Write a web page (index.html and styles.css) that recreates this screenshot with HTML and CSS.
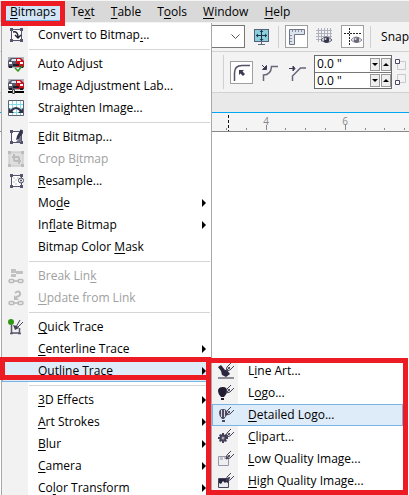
FILE: index.html
```html
<!DOCTYPE html>
<html lang="en">
<head>
<meta charset="utf-8">
<title>Bitmaps menu</title>
<link rel="stylesheet" href="styles.css">
</head>
<body>
<svg class="defs" aria-hidden="true">
  <defs>
    <g id="frame"><path d="M3.500 2.500h10v11h-10z" fill="#fff" stroke="#55556f"/><path d="M2 1h3v3H2zM12 1h3v3h-3zM2 12h3v3H2zM12 12h3v3h-3z" fill="#55556f"/></g>
    <g id="car"><path d="M0 1h16v11H0z" fill="#aeb2bc"/><path d="M0 5l3-3h5v9H0z" fill="#565a6c"/><path d="M8 2h5l3 3v6H8z" fill="#c4141c"/><path d="M4 3h4v2H3zM9 3h3l1 2H9z" fill="#e4e8ee"/><path d="M1 6h3v2H1zM12 6h3v2h-3z" fill="#fff"/><path d="M5 8h6v2H5zM1 10h3v2H1zM12 10h3v2h-3z" fill="#201c28"/></g>
    <g id="chain" fill="none" stroke="#b9b9b9" stroke-width="1.500"><rect x="1" y="11.500" width="5" height="3" rx="1.500"/><rect x="10" y="11.500" width="5" height="3" rx="1.500"/><path d="M5 13h6"/></g>
    <g id="pen"><path d="M8 8l1-4 4-4M8 8l4-1 4-4M8 8l4-4" fill="none" stroke="#454056"/><circle cx="11" cy="5" r="1" fill="#454056"/></g>
    <g id="eye"><path d="M0 4Q5-2 11 4Q6 9 0 4z" fill="#fff" stroke="#55556a"/><circle cx="5.500" cy="4" r="2.800" fill="#33334a"/><circle cx="4.500" cy="3" r="1" fill="#d8dde8"/></g>
  </defs>
</svg>

<div class="app">
  <nav class="menubar">
    <button class="open"><u>B</u>itmaps</button>
    <button>Te<u>x</u>t</button>
    <button><u>T</u>able</button>
    <button>T<u>o</u>ols</button>
    <button><u>W</u>indow</button>
    <button><u>H</u>elp</button>
  </nav>

  <div class="toolbar standard">
    <select aria-label="Zoom level"><option></option></select>
    <button class="tool" aria-label="Full screen"><svg width="16" height="16"><rect x="1.500" y=".5" width="14" height="12" fill="#8bd0dd" stroke="#55607a"/><path d="M5 15.500h7M8.500 13v2" stroke="#666a80"/><path d="M3 6.500h11M8.500 1v11" stroke="#23334c"/><path d="M3 6.500l2-2v4zM14 6.500l-2-2v4zM8.500 1l-2 2h4zM8.500 12l-2-2h4z" fill="#23334c"/></svg></button>
    <span class="rule"></span>
    <button class="tool boxed" aria-label="Rulers"><svg width="17" height="17"><path d="M1.500 1.500h15v5h-10v10h-5z" fill="#dbe3ed" stroke="#707487"/><path d="M4.500 2v2M7.500 2v2M10.500 2v2M13.500 2v2M2 7.500h2M2 10.500h2M2 13.500h2" stroke="#8c90a5"/></svg></button>
    <button class="tool" aria-label="Grid"><svg width="17" height="17"><path d="M2.500 0v14M5.500 0v14M8.500 0v14M11.500 0v14M14.500 0v14M0 2.500h16M0 5.500h16M0 8.500h16M0 11.500h16" stroke="#aeb0be"/><use href="#eye" x="5" y="8"/></svg></button>
    <button class="tool boxed" aria-label="Guidelines"><svg width="18" height="17"><path d="M5.500 0v17M0 5.500h17" stroke="#222" stroke-dasharray="2 1"/><use href="#eye" x="7" y="8" opacity=".75"/></svg></button>
    <span class="rule"></span>
    <span class="snap">Snap</span>
  </div>

  <div class="toolbar property">
    <span class="rule"></span>
    <button class="tool boxed" aria-label="Round corner"><svg width="17" height="17"><path d="M1.500 17V9Q1.500 1.500 9 1.500h8" fill="none" stroke="#555268" stroke-width="1.500"/><path d="M6 6h5l-1.500 1.500L12 10l-2 2-2.500-2.500L6 11z" fill="#3d3a54"/></svg></button>
    <button class="tool" aria-label="Scalloped corner"><svg width="17" height="17"><path d="M2.500 17v-6Q10 11 10.500 2.500H17" fill="none" stroke="#68657a" stroke-width="1.500"/><path d="M1 1l3 3M5.500 1.500v4h-4z" fill="#3d3a54" stroke="#3d3a54"/></svg></button>
    <button class="tool" aria-label="Chamfered corner"><svg width="17" height="17"><path d="M3.500 17v-5l8-8H17" fill="none" stroke="#68657a" stroke-width="1.500"/><path d="M0 4.500h5M4 2l2 2.500L4 7z" fill="#3d3a54" stroke="#3d3a54"/></svg></button>
    <div class="fields">
      <div class="field"><input aria-label="Corner radius top" value='0.0 "'><button aria-label="Decrease top radius"><i class="down"></i></button><button aria-label="Increase top radius"><i class="up"></i></button></div>
      <div class="field"><input aria-label="Corner radius bottom" value='0.0 "'><button aria-label="Decrease bottom radius"><i class="down"></i></button><button aria-label="Increase bottom radius"><i class="up"></i></button></div>
    </div>
    <svg class="corners" width="14" height="30"><path d="M3.500 4.500h8v8h-8zM3.500 17.500h8v8h-8z" fill="none" stroke="#c8c8d0"/><path d="M1.500 2.500h4v4h-4zM1.500 23.500h4v4h-4z" fill="#fff" stroke="#4c4966"/></svg>
  </div>

  <div class="tabs"></div>
  <div class="ruler">
    <svg width="220" height="18" aria-hidden="true"><path d="M6.500 15v2M26.500 15v2M46.500 12v5M65.500 15v2M85.500 15v2M105.500 15v2M125.500 12v5M145.500 15v2M164.500 15v2M184.500 15v2" stroke="#888"/><path d="M8.500 2v16" stroke="#111" stroke-dasharray="3 2"/><text x="46" y="12">4</text><text x="125" y="12">6</text></svg>
  </div>
  <main class="canvas"></main>

  <div class="menu main-menu">
    <button><svg class="icon"><use href="#frame"/><path d="M5 5q5-1 5 5M7 8l3 3 3-3" fill="none" stroke="#262639" stroke-width="1.500"/></svg>Convert to Bitmap<u>.</u>..</button>
    <hr>
    <button><svg class="icon"><use href="#car"/><path d="M7 12l3 3 4-5" fill="none" stroke="#32951e" stroke-width="1.500"/></svg>Au<u>t</u>o Adjust</button>
    <button><svg class="icon"><use href="#car"/><path d="M0 13h16v2H0z"/><path d="M4.500 11.500h2v4h-2z" fill="#ddd" stroke="#444"/></svg>Image Adjustment Lab...</button>
    <button><svg class="icon"><path d="M.5 .5h15v15H.5z" fill="#fff" stroke="#5e6074"/><path d="M4.500 1v14M8.500 1v14M12.500 1v14M1 4.500h14M1 8.500h14M1 12.500h14" stroke="#82dce7"/><path d="M3 11q5-6 10 0" fill="none" stroke="#333047" stroke-width="2"/><path d="M1 8v5h5zM15 8v5h-5z" fill="#333047"/></svg>Strai<u>g</u>hten Image...</button>
    <hr>
    <button><svg class="icon"><use href="#frame"/><path d="M13 0l-4 7-1 4 3-1 4-6z" fill="#35354c"/><path d="M8 13l5-6v6z" fill="#77778b"/></svg><u>E</u>dit Bitmap...</button>
    <button disabled><svg class="icon"><path d="M1 1h14v14H1z" fill="#dedede" stroke="#c4c4c4"/><path d="M0 0h3v3H0zM13 0h3v3h-3zM0 13h3v3H0zM13 13h3v3h-3zM4 5h7v2H4zM5 3h2v7H5zM6 9h7v2H6zM10 6h2v7h-2z" fill="#bcbcbc"/></svg>Crop B<u>i</u>tmap</button>
    <button><svg class="icon"><use href="#frame"/><path d="M5 4h2v2H5zM9 4h2v2H9zM7 6h2v2H7zM5 8h2v2H5zM7 10h2v2H7z" fill="#ddd"/><circle cx="13" cy="7.500" r="2.500" fill="#fff" stroke="#44445c"/><circle cx="13" cy="7.500" r="1" fill="#44445c"/></svg><u>R</u>esample...</button>
    <button class="sub">Mo<u>d</u>e</button>
    <button class="sub">In<u>f</u>late Bitmap</button>
    <button>Bitmap Color <u>M</u>ask</button>
    <hr>
    <button disabled><svg class="icon"><use href="#chain"/><path d="M3 1h5v4H3zM3 6h5v3H3zM8 3h7v3H8z" fill="#c2c2c2"/></svg>Break Lin<u>k</u></button>
    <button disabled><svg class="icon"><use href="#chain"/><path d="M7 3q4-3 5 0t-4 4" fill="none" stroke="#bbb" stroke-width="2"/><path d="M6 5v5h5z" fill="#bbb"/></svg><u>U</u>pdate from Link</button>
    <hr>
    <button><svg class="icon"><path d="M3.500 6v8h8V9M2 14.500h3M10 14.500h3" fill="none" stroke="#56566c" stroke-width="1.500"/><path d="M5 6l2 5 4-2-2-2z" fill="#454558"/><path d="M8 8l4-7M9 9l6-6" fill="none" stroke="#454558"/><circle cx="3" cy="3" r="3" fill="#319614"/></svg><u>Q</u>uick Trace</button>
    <button class="sub"><u>C</u>enterline Trace</button>
    <button class="sub active">Outline Trace</button>
    <hr>
    <button class="sub"><u>3</u>D Effects</button>
    <button class="sub"><u>A</u>rt Strokes</button>
    <button class="sub"><u>B</u>lur</button>
    <button class="sub"><u>C</u>amera</button>
    <button class="sub">Co<u>l</u>or Transform</button>
  </div>

  <div class="menu trace-menu">
    <button><svg class="icon"><path d="M0 4l3-2 4 5 2 0 3 4-4 3-4-2-1-4zM0 14.500h16v1H0z" fill="#2c273e"/><use href="#pen"/></svg>L<u>i</u>ne Art...</button>
    <button><svg class="icon"><path d="M0 6q0-4 5-4 4 0 4 4 0 3-3 6H3Q0 9 0 6zM3 13h3v2H3z" fill="#211c32"/><use href="#pen"/></svg>L<u>o</u>go...</button>
    <button class="active"><svg class="icon"><path d="M1 6q0-4 4-4t4 4q0 3-3 6H4Q1 9 1 6zM4 13h3v2H4z" fill="#4d4a60"/><path d="M3.500 3v7M6.500 3v7" stroke="#d6dbe7"/><use href="#pen"/></svg><u>D</u>etailed Logo...</button>
    <button><svg class="icon"><path d="M4 4h2v2l2-1 1 2-1 1h2v2H8l1 2-2 1-1-1v2H4v-2l-2 1-1-2 1-1H0V8h2L1 6l2-1 1 1z" fill="#454057"/><circle cx="5" cy="9" r="1.500" fill="#aaa9b7"/><use href="#pen"/></svg><u>C</u>lipart...</button>
    <button><svg class="icon"><path d="M.5 5.500h10v9H.5z" fill="#edf0f2" stroke="#9997a5"/><path d="M2 6h3v3H2zM6 6h3v2H6z" fill="#c2bfca"/><use href="#pen"/></svg><u>L</u>ow Quality Image...</button>
    <button><svg class="icon"><path d="M.5 5.500h10v9H.5z" fill="#e8ecf1" stroke="#474459"/><path d="M1 6h9v4L8 9l-1 1-2-2-2 3-2-1z" fill="#262139"/><use href="#pen"/></svg><u>H</u>igh Quality Image...</button>
  </div>

  <div class="mark mark-title"></div>
  <div class="mark mark-row"></div>
  <div class="mark mark-submenu"></div>
</div>
</body>
</html>
```
FILE: styles.css
```css
* { box-sizing: border-box; }
body {
  margin: 0;
  overflow: hidden;
  background: #fff;
  color: #000;
  font: 12px/16px "Segoe UI", "Open Sans", "Noto Sans", sans-serif;
}
button, input, select { margin: 0; padding: 0; border: 0; border-radius: 0; font: inherit; color: inherit; background: none; }
u { text-decoration-thickness: 1px; text-underline-offset: 2px; }
.defs { position: absolute; width: 0; height: 0; }
.app { position: relative; display: flex; flex-direction: column; height: 100vh; overflow: hidden; }

.menubar {
  display: flex;
  flex: none;
  height: 22px;
  padding-left: 5px;
  border-top: 1px solid #f4f4f4;
  background: #d9d9d9;
}
.menubar button { padding: 0 8px; line-height: 22px; }
.menubar .open { padding: 0 5px; margin-right: 2px; background: #d3e6f8; border-bottom: 2px solid #62a8e2; }

.toolbar { display: flex; flex: none; align-items: center; background: #f3f3f3; border-bottom: 1px solid #d2d2d2; }
.rule { width: 1px; height: 22px; background: #d0d0d0; }
.tool { display: grid; place-items: center; width: 23px; height: 23px; }
.tool svg { display: block; }
.boxed { background: #fff; border: 1px solid #9f9f9f; }

.standard { height: 30px; padding-left: 145px; }
.standard select {
  appearance: none;
  width: 100px;
  height: 23px;
  margin-right: 5px;
  border: 1px solid #777;
  background: #fff url("data:image/svg+xml,%3Csvg xmlns='http://www.w3.org/2000/svg' width='9' height='6'%3E%3Cpath d='M.5 .5l4 4 4-4' fill='none' stroke='%23555'/%3E%3C/svg%3E") no-repeat right 4px center;
}
.standard .rule { margin: 0 6px; }
.standard .boxed + .tool { margin: 0 5px; }
.snap { margin-left: 4px; }

.property { height: 41px; padding-left: 223px; }
.property .rule { height: 34px; margin-right: 6px; }
.property .tool { margin-right: 5px; }
.fields { display: flex; flex-direction: column; margin-right: 2px; border: 1px solid #6b6b6b; background: #fff; }
.field { display: flex; align-items: center; height: 16px; }
.field + .field { border-top: 1px solid #777; }
.field input { width: 55px; height: 14px; padding-left: 2px; outline: 0; }
.field button { display: grid; place-items: center; width: 10px; height: 13px; background: #eee; border: 1px solid #999; }
.field button + button { margin-left: 1px; }
.field i { border: 3px solid transparent; }
.field .down { border-top-color: #000; border-bottom: 0; }
.field .up { border-bottom-color: #000; border-top: 0; }

.tabs { flex: none; height: 19px; background: #e9e9e9; }
.ruler { flex: none; height: 20px; padding-left: 220px; background: #f4f4f4; border-top: 1px solid #00a6f4; border-bottom: 1px solid #888; overflow: hidden; }
.ruler svg { display: block; }
.ruler text { font-size: 10px; fill: #888; text-anchor: middle; }
.canvas { flex: 1; background: #fff; }

.menu { position: absolute; z-index: 1; display: flex; flex-direction: column; background: linear-gradient(90deg, #f2f2f2 26px, #fff 26px); }
.menu button { position: relative; flex: none; height: 22px; padding-left: 36px; text-align: left; white-space: nowrap; line-height: 22px; }
.menu button:disabled { color: #a0a0a0; }
.menu hr { flex: none; width: calc(100% - 28px); height: 1px; margin: 3px 1px 3px 27px; border: 0; background: #d5d5d5; }
.icon { position: absolute; left: 6px; top: 3px; width: 16px; height: 16px; }
.sub::after { content: ""; position: absolute; right: 5px; top: 7px; border: 4px solid transparent; border-left-color: #000; border-right: 0; }
.menu .active { background: #deebf8; box-shadow: inset 0 0 0 1px #78b5e4; }
.main-menu { left: 1px; top: 23px; width: 211px; bottom: 0; padding-top: 1px; border: 1px solid #a8a8a8; border-width: 0 1px; overflow: hidden; }
.trace-menu { left: 212px; top: 360px; width: 191px; bottom: 0; }

.mark { position: absolute; z-index: 2; border: 5px solid #ed1c24; pointer-events: none; }
.mark-title { left: 1px; top: 1px; width: 64px; height: 25px; }
.mark-row { left: 0; top: 357px; width: 211px; height: 23px; border-right: 0; }
.mark-submenu { left: 206px; top: 358px; right: 1px; bottom: 0; }
```
